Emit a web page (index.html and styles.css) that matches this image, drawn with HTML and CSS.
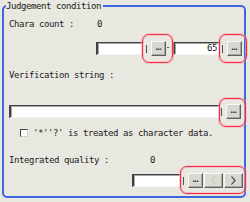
FILE: index.html
```html
<!DOCTYPE html>
<html>
<head>
<meta charset="utf-8">
<link rel="stylesheet" href="styles.css">
</head>
<body>
<fieldset class="group">
  <legend class="title">Judgement condition</legend>
  <div class="row r1"><span class="label lab1">Chara count :</span><span>0</span></div>
  <div class="row r2">
    <span class="field f1"></span>
    <span class="hl hl1"><span class="mark"></span><button class="btn dots">…</button></span>
    <span class="dash"></span>
    <span class="field f2">65</span>
    <span class="hl hl2"><span class="mark"></span><button class="btn dots">…</button></span>
  </div>
  <div class="row r3"><span class="label">Verification string :</span></div>
  <div class="row r4">
    <span class="field f3"></span>
    <span class="hl hl3"><span class="mark"></span><button class="btn dots">…</button></span>
  </div>
  <div class="row r5"><span class="check"></span><span class="label">'*''?' is treated as character data.</span></div>
  <div class="row r6"><span class="label lab6">Integrated quality :</span><span>0</span></div>
  <div class="row r7">
    <span class="field f4"></span>
    <span class="hl hl4"><span class="mark"></span><button class="btn dots">…</button><button class="btn arrow off"><svg width="5" height="9" viewBox="0 0 5 9"><polyline points="4.5,0.5 1,4.5 4.5,8.5" fill="none" stroke="currentColor" stroke-width="1.1"/></svg></button><button class="btn arrow"><svg width="5" height="9" viewBox="0 0 5 9"><polyline points="0.5,0.5 4,4.5 0.5,8.5" fill="none" stroke="currentColor" stroke-width="1.1"/></svg></button></span>
  </div>
</fieldset>
</body>
</html>
```
FILE: styles.css
```css
html, body {
  margin: 0;
  padding: 0;
  background: #e8e8e0;
}
body {
  width: 250px;
  height: 202px;
  padding-left: 2px;
  box-sizing: border-box;
  font-family: "DejaVu Sans Mono", "Liberation Mono", monospace;
  font-size: 9px;
  letter-spacing: -0.42px;
  color: #202020;
}
.group {
  margin: 0;
  width: 244px;
  box-sizing: border-box;
  border: 2px solid #3c66dc;
  border-radius: 5px;
  padding: 0 0 8px 5px;
}
.title {
  padding: 0 2px 0 0;
  margin-left: -3px;
  line-height: 12px;
  height: 12px;
}
.row {
  display: flex;
  align-items: center;
  white-space: nowrap;
}
.r1 { margin-top: 6px; height: 12px; }
.lab1 { width: 88px; }
.r2 { margin-top: 11px; height: 15px; padding-left: 87px; }
.r3 { margin-top: 13px; height: 12px; }
.r4 { margin-top: 23px; height: 15px; }
.r5 { margin-top: 8px; height: 12px; padding-left: 11px; }
.r6 { margin-top: 15px; height: 12px; }
.lab6 { width: 141px; }
.r7 { margin-top: 7px; height: 15px; padding-left: 123px; }

.field {
  height: 13px;
  box-sizing: border-box;
  background: #fff;
  border-top: 1px solid #404040;
  border-left: 2px solid #404040;
  border-right: 1px solid #f4f4f4;
  border-bottom: 1px solid #f4f4f4;
  box-shadow: inset 1px 1px 0 #a8a8a8;
  text-align: right;
  line-height: 11px;
  padding-right: 3px;
}
.f1 { width: 48px; }
.f2 { width: 48px; margin-left: 4px; }
.f3 { width: 211px; }
.f4 { width: 49px; }

.mark {
  width: 1px;
  height: 8px;
  background: #505050;
  margin-right: 4px;
}
.hl {
  position: relative;
  display: flex;
  align-items: center;
  height: 15px;
}
.hl::after {
  content: "";
  position: absolute;
  border: 1.5px solid #ec2f45;
  border-radius: 7px;
  box-shadow: 0 0 0 1px rgba(255, 170, 180, 0.55), inset 0 0 0 1px rgba(255, 170, 180, 0.55);
  pointer-events: none;
}
.hl1 { margin-left: 2px; }
.hl1::after { left: -4px; right: -7px; top: -7px; bottom: -7px; }
.hl2 { margin-left: 1px; }
.hl2::after { left: -3px; right: -5px; top: -7px; bottom: -7px; }
.hl3 { margin-left: 1px; }
.hl3::after { left: -2px; right: -5px; top: -6px; bottom: -8px; }
.hl4 { margin-left: 2px; }
.hl4::after { left: -3px; right: -3px; top: -7px; bottom: -6px; }

.dash {
  width: 2px;
  height: 1px;
  background: #606060;
  margin-left: 1px;
  margin-bottom: 2px;
}
.btn {
  width: 15px;
  height: 15px;
  box-sizing: border-box;
  margin: 0;
  padding: 0;
  background: #d8d8d0;
  border-top: 1px solid #f8f8f8;
  border-left: 1px solid #f8f8f8;
  border-right: 1px solid #606060;
  border-bottom: 1px solid #606060;
  box-shadow: inset -1px -1px 0 #a8a8a0;
  font-family: "DejaVu Sans Mono", monospace;
  display: flex;
  align-items: center;
  justify-content: center;
  color: #303030;
}
.dots {
  font-size: 10px;
  letter-spacing: 0;
  line-height: 10px;
  padding-bottom: 3px;
}
.arrow {
  width: 19px;
  margin-left: 1px;
  color: #303030;
}
.arrow.off {
  margin-left: 1px;
  color: #c4c4bc;
  background: #dcdcd4;
}
.check {
  width: 8px;
  height: 8px;
  box-sizing: border-box;
  background: #fff;
  border-top: 1px solid #404040;
  border-left: 1px solid #404040;
  border-right: 1px solid #d0d0d0;
  border-bottom: 1px solid #d0d0d0;
  margin-right: 5px;
}
```
